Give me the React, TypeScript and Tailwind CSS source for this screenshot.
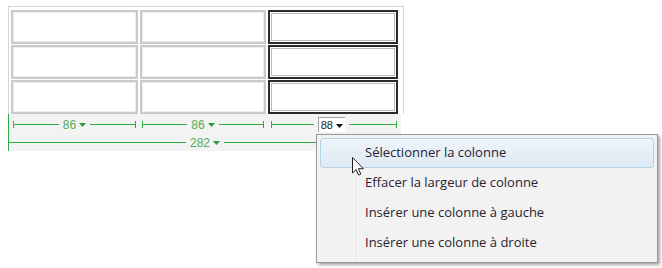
import React from 'react';

// largeurs de colonnes (mesures affichées sous le tableau)
const cols = [
  { w: 123, label: '86', boxed: false },
  { w: 122, label: '86', boxed: false },
  { w: 126, label: '88', boxed: true },
];

const items = [
  'Sélectionner la colonne',
  'Effacer la largeur de colonne',
  'Insérer une colonne à gauche',
  'Insérer une colonne à droite',
];

function Caret({ dark }: { dark?: boolean }) {
  return (
    <svg width="7" height="4" viewBox="0 0 7 4" className="ml-[3px] mt-[1px]">
      <path d="M0 0h7L3.5 4z" fill={dark ? '#111' : '#2a9a3a'} />
    </svg>
  );
}

function Segment({ w, label, boxed }: { w: number; label: string; boxed: boolean }) {
  return (
    <div className="flex items-center h-[9px]" style={{ width: w }}>
      <div className="w-px h-[7px] bg-[#2fae3f]" />
      <div className="flex-1 h-px bg-[#2fae3f]" />
      {boxed ? (
        <div className="flex items-center h-[15px] px-[2px] mx-[4px] bg-white border-t border-l border-[#a0a0a0] text-[11px] text-[#222] leading-none">
          {label}
          <Caret dark />
        </div>
      ) : (
        <div className="flex items-center px-[4px] text-[12px] text-[#55aa55] leading-none">
          {label}
          <Caret />
        </div>
      )}
      <div className={boxed ? 'w-[47px] h-px bg-[#2fae3f]' : 'flex-1 h-px bg-[#2fae3f]'} />
      <div className="w-px h-[7px] bg-[#2fae3f]" />
    </div>
  );
}

function Cell({ bold }: { bold: boolean }) {
  return bold ? (
    <div className="h-[34px] border-2 border-[#2a2a2a] bg-white p-px">
      <div className="h-full border border-[#b8b8b8]" />
    </div>
  ) : (
    <div className="h-[34px] border-2 border-[#cacaca] bg-white">
      <div className="h-full border border-[#ececec]" />
    </div>
  );
}

export default function App() {
  return (
    <div
      className="relative w-[662px] h-[268px] bg-white overflow-hidden"
      style={{ fontFamily: '"Liberation Sans", Arial, sans-serif' }}
    >
      <div className="pt-[6px] pl-[8px]">
        <div className="w-[396px] border border-[#d6d6d6] border-b-0 pt-[3px] pl-[2px] pr-[5px] pb-0">
          <div className="grid grid-cols-[127px_126px_130px] gap-x-[2px] gap-y-px">
            {[0, 1, 2].map((r) =>
              cols.map((c, i) => <Cell key={`${r}-${i}`} bold={i === 2} />)
            )}
          </div>
        </div>
        {/* zone des mesures */}
        <div className="relative w-[393px] h-[37px] bg-[#f3f3f3] border-l border-[#2fae3f]">
          <div className="flex pl-[4px] pt-[6px]">
            <Segment {...cols[0]} />
            <div className="w-[6px]" />
            <Segment {...cols[1]} />
            <div className="w-[7px]" />
            <Segment {...cols[2]} />
          </div>
          <div className="flex items-center h-[9px] mt-[9px] w-[392px]">
            <div className="flex-1 h-px bg-[#2fae3f]" />
            <div className="flex items-center px-[4px] text-[12px] text-[#55aa55] leading-none">
              282
              <Caret />
            </div>
            <div className="flex-1 h-px bg-[#2fae3f]" />
          </div>
        </div>
      </div>

      {/* menu contextuel */}
      <div
        className="absolute left-[316px] top-[134px] w-[342px] h-[129px] bg-[#f2f2f2] border border-[#979797] shadow-[2px_2px_3px_rgba(0,0,0,0.35)] p-[3px]"
        style={{ fontFamily: '"Open Sans", "Noto Sans", sans-serif' }}
      >
        <div className="absolute left-[39px] top-[2px] bottom-[2px] w-px bg-[#e2e3e3]" />
        <div className="absolute left-[40px] top-[2px] bottom-[2px] w-px bg-white" />
        <div className="relative flex flex-col">
          {items.map((t, i) => (
            <div
              key={t}
              className={
                'h-[30px] flex items-center pl-[44px] text-[13px] text-[#2a2230] rounded-[3px] ' +
                (i === 0
                  ? 'border border-[#b4d4e6] bg-gradient-to-b from-[#eef4fa] to-[#dde9f4]'
                  : 'border border-transparent')
              }
            >
              {t}
            </div>
          ))}
        </div>
      </div>

      {/* curseur */}
      <svg className="absolute left-[352px] top-[157px]" width="13" height="20" viewBox="0 0 13 20">
        <path
          d="M0.5 0.5v15.5l3.6-3.5 2.4 5.6 2.3-1-2.4-5.4h5z"
          fill="#fff"
          stroke="#222"
          strokeWidth="1"
          strokeLinejoin="round"
        />
      </svg>
    </div>
  );
}
